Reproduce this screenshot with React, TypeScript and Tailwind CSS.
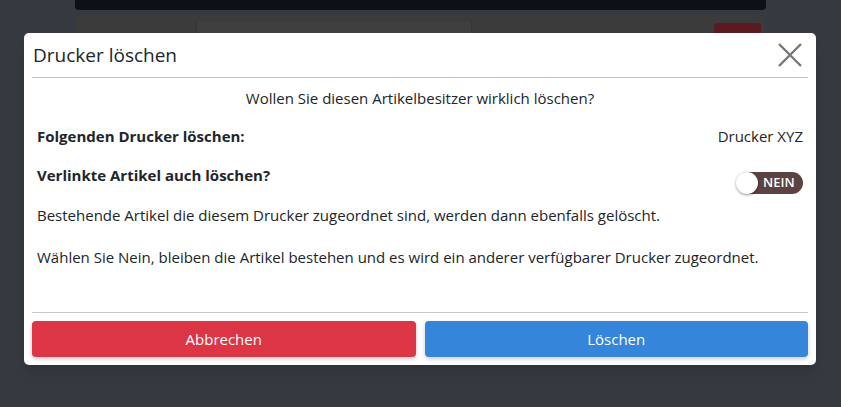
import { useState } from 'react';

export default function App() {
  const [deleteLinked, setDeleteLinked] = useState(false);

  return (
    <div className="relative h-[407px] w-[841px] overflow-hidden bg-[#343a3f] font-['Open_Sans',sans-serif]">
      {/* Hintergrund-Seite (abgedunkelt) */}
      <div className="mx-[75px] h-[10px] rounded-b bg-[#0c1117]" />
      <div className="mx-[76px] mt-[6px] flex h-[30px] items-start rounded-t bg-[#3b3b3c] px-[2px] pt-[6px]">
        <div className="ml-[118px] h-[24px] w-[276px] border-x border-[#353535] bg-[#3f3f40]" />
        <div className="ml-auto mr-[2px] mt-[1px] h-[24px] w-[47px] rounded-sm bg-[#5b1a1f]" />
      </div>

      {/* Modal */}
      <div className="absolute inset-0 pl-[24px] pr-[25px] pt-[33px]">
        <div className="rounded-[5px] bg-white shadow-lg">
          {/* Header */}
          <div className="mx-[8px] flex h-[45px] items-center justify-between border-b border-[#c8c8c8]">
            <h2 className="ml-[1px] text-[19px] text-[#212529]">Drucker löschen</h2>
            <button type="button" className="mr-[4px] text-[#777]" aria-label="Schließen">
              <svg width="28" height="28" viewBox="0 0 28 28" fill="none" stroke="currentColor" strokeWidth="2.4">
                <path d="M3 3L25 25M25 3L3 25" />
              </svg>
            </button>
          </div>

          {/* Body */}
          <div className="mx-[8px] h-[235px] border-b border-[#c8c8c8] px-[5px] pt-[9px] text-[15px] text-[#212529]">
            <p className="text-center">Wollen Sie diesen Artikelbesitzer wirklich löschen?</p>

            <div className="mt-[15px] flex items-center justify-between">
              <span className="font-bold">Folgenden Drucker löschen:</span>
              <span>Drucker XYZ</span>
            </div>

            <div className="mt-[17px] flex items-start justify-between">
              <span className="font-bold">Verlinkte Artikel auch löschen?</span>
              <button
                type="button"
                onClick={() => setDeleteLinked(!deleteLinked)}
                className={`mt-[8px] flex h-[22px] w-[66px] items-center rounded-full ${deleteLinked ? 'bg-[#2e7d32]' : 'bg-[#5d4242]'}`}
              >
                <span className="ml-[-1px] h-[22px] w-[22px] rounded-full bg-white shadow-[0_1px_3px_rgba(0,0,0,0.4)]" />
                <span className="ml-[5px] text-[13px] font-semibold text-white">{deleteLinked ? 'JA' : 'NEIN'}</span>
              </button>
            </div>

            <p className="mt-[10px]">Bestehende Artikel die diesem Drucker zugeordnet sind, werden dann ebenfalls gelöscht.</p>
            <p className="mt-[19px]">Wählen Sie Nein, bleiben die Artikel bestehen und es wird ein anderer verfügbarer Drucker zugeordnet.</p>
          </div>

          {/* Footer */}
          <div className="flex gap-[9px] p-[8px]">
            <button
              type="button"
              className="h-[36px] flex-1 rounded-[4px] bg-[#dc3545] text-[15px] text-white shadow-[0_2px_4px_rgba(0,0,0,0.2)]"
            >
              Abbrechen
            </button>
            <button
              type="button"
              className="h-[36px] flex-1 rounded-[4px] bg-[#3585da] text-[15px] text-white shadow-[0_2px_4px_rgba(0,0,0,0.2)]"
            >
              Löschen
            </button>
          </div>
        </div>
      </div>
    </div>
  );
}
